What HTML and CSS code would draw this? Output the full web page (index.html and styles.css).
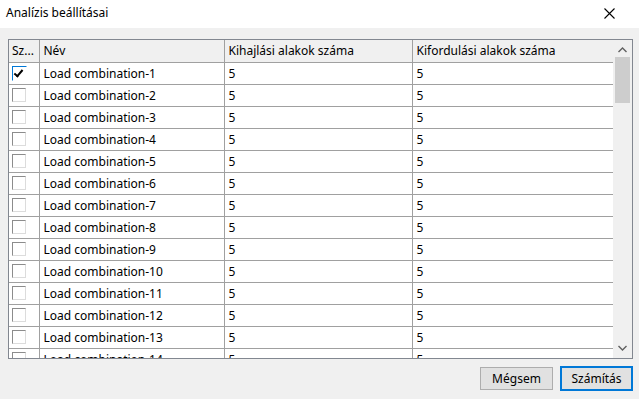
FILE: index.html
```html
<!DOCTYPE html>
<html lang="hu">
<head>
    <meta charset="UTF-8">
    <title>Analízis beállításai</title>
    <link rel="stylesheet" href="styles.css">
</head>
<body>
    <div class="window">
        <div class="titlebar">
            <span class="title">Analízis beállításai</span>
            <svg class="close" width="11" height="11" viewBox="0 0 11 11">
                <path d="M0.5 0.5 L10.5 10.5 M10.5 0.5 L0.5 10.5" stroke="#000" stroke-width="1.1" fill="none"/>
            </svg>
        </div>

        <div class="content">
            <div class="grid">
                <div class="grid-body">
                    <table class="combos">
                        <colgroup>
                            <col class="c-check">
                            <col class="c-name">
                            <col class="c-buck">
                            <col class="c-tors">
                        </colgroup>
                        <thead>
                            <tr>
                                <th>Sz...</th>
                                <th>Név</th>
                                <th>Kihajlási alakok száma</th>
                                <th>Kifordulási alakok száma</th>
                            </tr>
                        </thead>
                        <tbody id="rows"></tbody>
                    </table>
                </div>
                <div class="scrollbar">
                    <svg class="arrow" width="9" height="6" viewBox="0 0 9 6">
                        <path d="M0.5 5 L4.5 1 L8.5 5" stroke="#606060" stroke-width="1.4" fill="none"/>
                    </svg>
                    <div class="track">
                        <div class="thumb"></div>
                    </div>
                    <svg class="arrow" width="9" height="6" viewBox="0 0 9 6">
                        <path d="M0.5 1 L4.5 5 L8.5 1" stroke="#606060" stroke-width="1.4" fill="none"/>
                    </svg>
                </div>
            </div>

            <div class="buttons">
                <button class="btn">Mégsem</button>
                <button class="btn btn-default">Számítás</button>
            </div>
        </div>
    </div>

    <script>
        // Fill the grid with load combinations
        const tbody = document.getElementById('rows');
        for (let i = 1; i <= 14; i++) {
            const row = document.createElement('tr');
            const checked = i === 1 ? ' checked' : '';
            row.innerHTML = `
                <td class="cell-check"><span class="box${checked}"></span></td>
                <td>Load combination-${i}</td>
                <td>5</td>
                <td>5</td>
            `;
            tbody.appendChild(row);
        }
    </script>
</body>
</html>
```

FILE: styles.css
```css
/* General styles */
body {
    margin: 0;
    padding: 0;
    font-family: "Noto Sans", "Open Sans", sans-serif;
    font-size: 12px;
    color: #000;
    background-color: #f0f0f0;
}

.window {
    width: 639px;
    height: 399px;
    display: flex;
    flex-direction: column;
    overflow: hidden;
}

/* Title bar */
.titlebar {
    height: 28px;
    background-color: #ffffff;
    display: flex;
    align-items: center;
    justify-content: space-between;
    padding: 0 24px 0 6px;
    flex-shrink: 0;
}

.title {
    font-size: 12px;
    margin-top: -3px;
}

.close {
    margin-top: -2px;
}

/* Main area */
.content {
    flex: 1;
    display: flex;
    flex-direction: column;
    padding: 11px 6px 0 8px;
}

.grid {
    height: 318px;
    border: 1px solid #828790;
    background-color: #f0f0f0;
    display: flex;
    overflow: hidden;
}

.grid-body {
    width: 606px;
    overflow: hidden;
    background-color: #ffffff;
}

/* Table */
.combos {
    border-collapse: collapse;
    table-layout: fixed;
    width: 606px;
}

.c-check { width: 30px; }
.c-name { width: 185px; }
.c-buck { width: 188px; }
.c-tors { width: 203px; }

.combos tr {
    height: 22px;
}

.combos th,
.combos td {
    padding: 1px 4px 0;
    text-align: left;
    font-weight: normal;
    white-space: nowrap;
    overflow: hidden;
    border-right: 1px solid #a0a0a0;
    border-bottom: 1px solid #a0a0a0;
    line-height: 20px;
}

.combos th {
    background-color: #f0f0f0;
}

.combos th:first-child {
    padding-left: 3px;
}

.cell-check {
    padding: 0 !important;
}

/* Checkbox cells */
.box {
    display: block;
    width: 14px;
    height: 14px;
    margin: 0 0 0 3px;
    box-sizing: border-box;
    border-top: 1px solid #8c8c8c;
    border-left: 1px solid #8c8c8c;
    border-right: 1px solid #dcdcdc;
    border-bottom: 1px solid #dcdcdc;
    background-color: #ffffff;
    position: relative;
}

.box.checked {
    width: 15px;
    height: 15px;
    border: 1px solid #0078d7;
    border-right-color: #ffffff;
    border-bottom-color: #ffffff;
}

.box.checked::after {
    content: "";
    position: absolute;
    left: 3px;
    top: 1px;
    width: 3px;
    height: 7px;
    border-right: 2px solid #000;
    border-bottom: 2px solid #000;
    transform: rotate(40deg);
}

/* Scroll bar */
.scrollbar {
    width: 17px;
    display: flex;
    flex-direction: column;
    align-items: center;
    padding: 0 1px;
    background-color: #f0f0f0;
}

.arrow {
    flex-shrink: 0;
    margin: 7px 0 4px;
}

.scrollbar .arrow:last-child {
    margin: 4px 0 7px;
}

.track {
    flex: 1;
    width: 100%;
}

.thumb {
    height: 46px;
    margin: 0 1px;
    background-color: #cdcdcd;
}

/* Buttons */
.buttons {
    display: flex;
    justify-content: flex-end;
    gap: 7px;
    padding-top: 8px;
}

.btn {
    width: 73px;
    height: 23px;
    font-family: "Noto Sans", "Open Sans", sans-serif;
    font-size: 12px;
    color: #000;
    background-color: #e1e1e1;
    border: 1px solid #adadad;
    padding: 0;
}

.btn-default {
    width: 73px;
    height: 25px;
    margin-top: -1px;
    border: 2px solid #0078d7;
}
```
